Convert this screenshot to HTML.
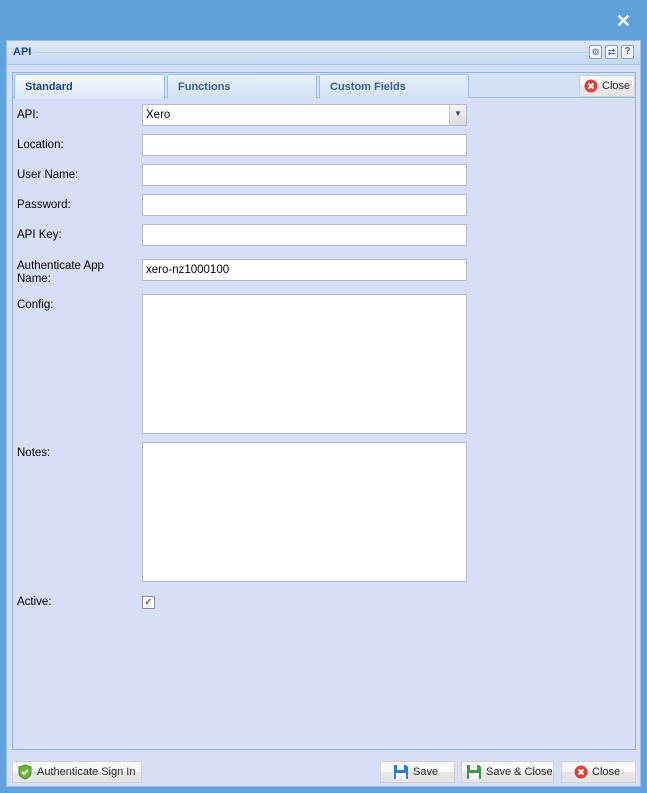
<!DOCTYPE html>
<html><head><style>
*{box-sizing:border-box}
body{margin:0;width:647px;height:793px;background:#62a2dc;font-family:"Liberation Sans",sans-serif;font-size:12px;position:relative;overflow:hidden;color:#000}
.abs{position:absolute}
.win{left:6px;top:40px;width:635px;height:747px;background:#d6dff7;border:1px solid #9cc0ea}
.hdr{left:7px;top:41px;width:633px;height:24px;background:linear-gradient(#dfe9f7,#c6d8f1);border-bottom:1px solid #a9c5ea}
.hdr .line{position:absolute;left:28px;right:50px;top:11px;border-top:1px solid #b5cdee}
.inner{left:12px;top:72px;width:624px;height:678px;border:1px solid #8cb3e6;background:#d6dff7}
.tabbar{left:13px;top:73px;width:622px;height:25px;background:#d3e1f5;border-bottom:1px solid #99bbe8}
.tab{top:74px;height:24px;border:1px solid #99bbe8;border-bottom:none;border-radius:3px 3px 0 0;background:linear-gradient(#e9f1fb,#d2e2f6);font-weight:bold;color:#3a5e96;font-size:11px;padding:6px 0 0 10px}
.tab.act{background:linear-gradient(#f5f9fe,#dde8f7);color:#15428b;height:25px}
.lbl{left:17px;font-size:11.5px;color:#000}
.inp{left:142px;width:325px;height:22px;background:#fff;border:1px solid #b5b8c8;font-size:11.5px;padding:4px 3px}
.btn{height:22px;border:1px solid #d0d0d0;border-radius:2px;background:linear-gradient(#fafafa 50%,#e6e6e6 50%);font-size:11px;color:#222;display:flex;align-items:center;padding-left:4px;gap:4px;white-space:nowrap}
</style></head><body>
<div class="abs" style="right:16px;top:11px;color:#fff;font-size:18px;font-weight:bold">✕</div>
<div class="abs win"></div>
<div class="abs hdr"><div class="line"></div><span style="position:absolute;left:6px;top:5px;font-weight:bold;color:#15428b;font-size:11px">API</span>
<span style="position:absolute;right:6px;top:4px;display:flex;gap:3px">
<span style="width:13px;height:14px;border:1px solid #7ea2d0;border-radius:2px;background:#f2f6fc;font-size:9px;color:#3a6aa8;text-align:center;line-height:12px">⚙</span>
<span style="width:13px;height:14px;border:1px solid #7ea2d0;border-radius:2px;background:#f2f6fc;font-size:9px;color:#3a6aa8;text-align:center;line-height:12px">⇄</span>
<span style="width:13px;height:14px;border:1px solid #7ea2d0;border-radius:2px;background:#f2f6fc;font-size:10px;font-weight:bold;color:#3a6aa8;text-align:center;line-height:12px">?</span></span></div>
<div class="abs inner"></div>
<div class="abs tabbar"></div>
<div class="abs tab act" style="left:14px;width:151px">Standard</div>
<div class="abs tab" style="left:167px;width:150px">Functions</div>
<div class="abs tab" style="left:319px;width:150px">Custom Fields</div>
<div class="abs btn" style="left:579px;top:75px;width:56px"><svg width="14" height="14"><circle cx="7" cy="7" r="6.5" fill="#e0403a"/><path d="M4.5 4.5l5 5M9.5 4.5l-5 5" stroke="#fff" stroke-width="2"/></svg>Close</div>
<div class="abs lbl" style="top:109px">API:</div>
<div class="abs inp" style="top:104px">Xero<div style="position:absolute;right:0;top:0;width:17px;height:20px;background:linear-gradient(#f4f4f4,#dcdcdc);border-left:1px solid #c8c8c8;font-size:8px;color:#2a4a80;text-align:center;line-height:18px">▼</div></div>
<div class="abs lbl" style="top:139px">Location:</div><div class="abs inp" style="top:134px"></div>
<div class="abs lbl" style="top:169px">User Name:</div><div class="abs inp" style="top:164px"></div>
<div class="abs lbl" style="top:199px">Password:</div><div class="abs inp" style="top:194px"></div>
<div class="abs lbl" style="top:229px">API Key:</div><div class="abs inp" style="top:224px"></div>
<div class="abs lbl" style="top:260px;line-height:13px">Authenticate App<br>Name:</div><div class="abs inp" style="top:259px">xero-nz1000100</div>
<div class="abs lbl" style="top:299px">Config:</div><div class="abs inp" style="top:294px;height:140px"></div>
<div class="abs lbl" style="top:447px">Notes:</div><div class="abs inp" style="top:442px;height:140px"></div>
<div class="abs lbl" style="top:596px">Active:</div>
<div class="abs" style="left:142px;top:596px;width:13px;height:13px;border:1px solid #8a8a8a;background:#fff;font-size:10px;line-height:11px;text-align:center;color:#333">✓</div>
<div class="abs btn" style="left:12px;top:761px;width:130px"><svg width="16" height="16"><path d="M8 1l6 2v5c0 4-3 6-6 7-3-1-6-3-6-7V3z" fill="#6cb43a" stroke="#4a8a22"/><path d="M5 8l2 2 4-4" stroke="#fff" stroke-width="2" fill="none"/></svg>Authenticate Sign In</div>
<div class="abs btn" style="left:380px;top:761px;width:75px;padding-left:12px"><svg width="16" height="16"><path d="M1 1h12l2 2v12H1z" fill="#2a7ad8"/><rect x="4" y="1" width="7" height="5" fill="#fff"/><rect x="3" y="9" width="10" height="6" fill="#fff"/></svg>Save</div>
<div class="abs btn" style="left:461px;top:761px;width:93px"><svg width="16" height="16"><path d="M1 1h12l2 2v12H1z" fill="#3a9a4a"/><rect x="4" y="1" width="7" height="5" fill="#fff"/><rect x="3" y="9" width="10" height="6" fill="#fff"/></svg>Save &amp; Close</div>
<div class="abs btn" style="left:561px;top:761px;width:75px;padding-left:12px"><svg width="14" height="14"><circle cx="7" cy="7" r="6.5" fill="#e0403a"/><path d="M4.5 4.5l5 5M9.5 4.5l-5 5" stroke="#fff" stroke-width="2"/></svg>Close</div>
</body></html>
